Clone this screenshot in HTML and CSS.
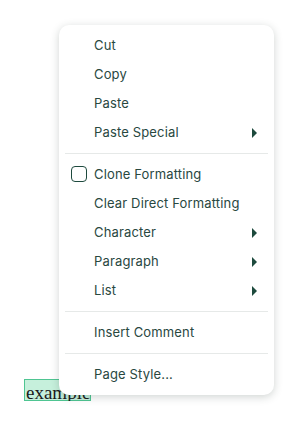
FILE: index.html
```html
<!DOCTYPE html>
<html lang="en">
<head>
    <meta charset="UTF-8">
    <meta name="viewport" content="width=device-width, initial-scale=1.0">
    <title>Context Menu</title>
    <link rel="stylesheet" href="styles.css">
</head>
<body>
    <div class="doc">
        <span class="selection">example</span>
    </div>

    <div class="context-menu">
        <div class="menu-item"><span class="label">Cut</span></div>
        <div class="menu-item"><span class="label">Copy</span></div>
        <div class="menu-item"><span class="label">Paste</span></div>
        <div class="menu-item has-sub"><span class="label">Paste Special</span><span class="arrow"></span></div>
        <div class="separator"></div>
        <div class="menu-item"><span class="check"></span><span class="label">Clone Formatting</span></div>
        <div class="menu-item"><span class="label">Clear Direct Formatting</span></div>
        <div class="menu-item has-sub"><span class="label">Character</span><span class="arrow"></span></div>
        <div class="menu-item has-sub"><span class="label">Paragraph</span><span class="arrow"></span></div>
        <div class="menu-item has-sub"><span class="label">List</span><span class="arrow"></span></div>
        <div class="separator"></div>
        <div class="menu-item"><span class="label">Insert Comment</span></div>
        <div class="separator"></div>
        <div class="menu-item"><span class="label">Page Style...</span></div>
    </div>
</body>
</html>
```

FILE: styles.css
```css
body {
    margin: 0;
    background-color: #fff;
    font-family: Inter, "Noto Sans", sans-serif;
}
.doc {
    display: flex;
    align-items: flex-start;
    padding: 379px 0 0 24px;
}
.selection {
    display: block;
    height: 20px;
    width: 64px;
    overflow: visible;
    font-family: "Liberation Serif", serif;
    font-size: 19px;
    line-height: 26px;
    color: #1a1a1a;
    background-color: #c6f0dc;
    border: 1px solid #4fc592;
    padding: 0 0 0 1px;
    box-sizing: content-box;
}

/* popup menu over the document */
.context-menu {
    position: absolute;
    left: 59px;
    top: 25px;
    width: 215px;
    box-sizing: border-box;
    padding: 6px 0;
    background-color: #fff;
    border-radius: 10px;
    box-shadow: 0 2px 8px rgba(40, 60, 50, 0.22);
}
.menu-item {
    display: flex;
    align-items: center;
    height: 29px;
    padding: 0 17px 0 35px;
    position: relative;
    font-size: 13px;
    line-height: 16px;
    color: #29483f;
    letter-spacing: 0.15px;
}
.label {
    flex: 1;
    margin-top: -1px;
}
.check {
    position: absolute;
    left: 12px;
    top: 6px;
    width: 16px;
    height: 16px;
    box-sizing: border-box;
    border: 1.5px solid #1e4a3e;
    border-radius: 4px;
}
.arrow {
    width: 0;
    height: 0;
    border-top: 5px solid transparent;
    border-bottom: 5px solid transparent;
    border-left: 5px solid #1d4a3d;
}
.separator {
    height: 1px;
    margin: 6px 6px;
    background-color: #e6e9e8;
}
```
